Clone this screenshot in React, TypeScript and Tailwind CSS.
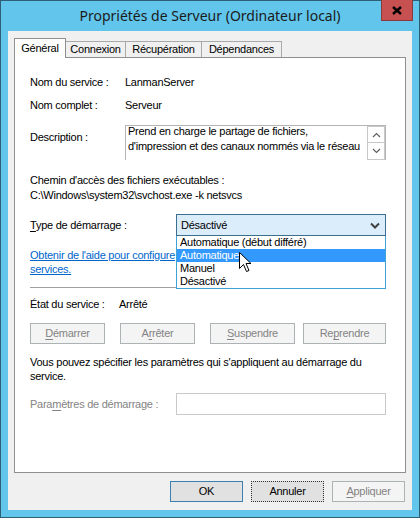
import React from 'react';

const Mn = ({ children }: { children: React.ReactNode }) => <span className="underline underline-offset-[2px]">{children}</span>;

const App = () => {
  return (
    <div className="relative w-[420px] h-[518px] bg-[#61c5ec] border border-[#2f5f74] flex flex-col font-['Liberation_Sans',Arial,sans-serif] text-[11px] tracking-[-0.25px] text-black select-none">
      {/* Title bar */}
      <div className="h-[30px] flex items-center justify-center pb-[1px]">
        <span className="font-['Noto_Sans',sans-serif] text-[14px] tracking-normal text-[#1b1b1b]">Propriétés de Serveur (Ordinateur local)</span>
      </div>
      <div className="absolute top-[-1px] right-[6px] w-[32px] h-[21px] bg-[#c75050] border border-[#8a3a3a] border-t-0 flex items-center justify-center">
        <svg width="10" height="9" viewBox="0 0 10 9">
          <path d="M1 1 L9 8 M9 1 L1 8" stroke="#000" strokeWidth="2.4" />
        </svg>
      </div>

      {/* Client area */}
      <div className="mx-[7px] mb-[7px] flex-1 bg-[#f0f0f0] flex flex-col pl-[6px] pr-[6px] pt-[7px]">
        {/* Tabs */}
        <div className="relative z-10 flex h-[20px] items-start">
          <div className="w-[52px] h-[20px] bg-white border border-b-0 border-[#8e8f8f] flex items-center justify-center pb-[1px]">Général</div>
          <div className="mt-[3px] w-[60px] h-[16px] border-t border-r border-[#a9a9a9] flex items-center justify-center">Connexion</div>
          <div className="mt-[3px] w-[76px] h-[16px] border-t border-r border-[#a9a9a9] flex items-center justify-center">Récupération</div>
          <div className="mt-[3px] w-[80px] h-[16px] border-t border-r border-[#a9a9a9] flex items-center justify-center">Dépendances</div>
        </div>

        {/* Panel */}
        <div className="-mt-[1px] h-[416px] bg-white border border-[#8e8f8f] flex flex-col pl-[15px] pr-[19px]">
          <div className="mt-[17px] h-[15px] flex items-center">
            <span className="w-[95px]">Nom du service :</span>
            <span>LanmanServer</span>
          </div>
          <div className="mt-[8px] h-[15px] flex items-center">
            <span className="w-[95px]">Nom complet :</span>
            <span>Serveur</span>
          </div>
          <div className="mt-[12px] flex items-start">
            <span className="w-[95px] mt-[5px] leading-[15px]">Description :</span>
            <div className="w-[261px] h-[35px] border border-[#b5b5b5] border-b-0 flex overflow-hidden">
              <div className="flex-1 pl-[2px] leading-[15px] -mt-[2px]">
                <div className="whitespace-nowrap">Prend en charge le partage de fichiers,</div>
                <div className="whitespace-nowrap">d'impression et des canaux nommés via le réseau</div>
              </div>
              <div className="w-[18px] flex flex-col">
                <div className="h-[17px] border border-[#c8c8c8] flex items-center justify-center">
                  <svg width="9" height="6" viewBox="0 0 9 6"><path d="M1 5 L4.5 1.5 L8 5" stroke="#606060" strokeWidth="1.2" fill="none" /></svg>
                </div>
                <div className="h-[17px] border border-t-0 border-[#c8c8c8] flex items-center justify-center">
                  <svg width="9" height="6" viewBox="0 0 9 6"><path d="M1 1 L4.5 4.5 L8 1" stroke="#606060" strokeWidth="1.2" fill="none" /></svg>
                </div>
              </div>
            </div>
          </div>
          <div className="mt-[13px] leading-[15px]">Chemin d'accès des fichiers exécutables :</div>
          <div className="leading-[15px]">C:\Windows\system32\svchost.exe -k netsvcs</div>

          {/* Startup type */}
          <div className="mt-[11px] flex items-center">
            <span className="w-[146px]"><Mn>T</Mn>ype de démarrage :</span>
            <div className="relative w-[210px] z-20">
              <div className="h-[22px] bg-[#dbecfa] border border-[#3c6e8f] flex items-center justify-between pl-[4px] pr-[5px]">
                <span>Désactivé</span>
                <svg width="10" height="7" viewBox="0 0 10 7"><path d="M1 1.5 L5 5.5 L9 1.5" stroke="#404040" strokeWidth="2" fill="none" /></svg>
              </div>
              <div className="absolute left-0 top-full w-[210px] bg-white border border-t-0 border-[#3ca3d4] flex flex-col leading-[13px]">
                <div className="h-[13px] pl-[3px]">Automatique (début différé)</div>
                <div className="h-[13px] pl-[3px] bg-[#3399ff] text-white">Automatique</div>
                <div className="h-[13px] pl-[3px]">Manuel</div>
                <div className="h-[13px] pl-[3px]">Désactivé</div>
                <svg className="absolute left-[62px] top-[16px]" width="13" height="21" viewBox="0 0 13 21">
                  <path d="M0.5 0.5 L0.5 16.5 L4.5 12.5 L7.5 19.5 L10 18.5 L7 11.5 L12 11.5 Z" fill="#fff" stroke="#000" strokeWidth="1" strokeLinejoin="miter" />
                </svg>
              </div>
            </div>
          </div>

          {/* Help link, partly hidden by the open list */}
          <div className="mt-[12px] leading-[14px] text-[#0066cc] underline">
            <div className="w-[146px] overflow-hidden whitespace-nowrap">Obtenir de l'aide pour configure</div>
            <div className="whitespace-nowrap">services.</div>
          </div>
          <div className="mt-[11px] h-px bg-[#a0a0a0]" />

          <div className="mt-[9px] h-[15px] flex items-center">
            <span className="w-[89px]">État du service :</span>
            <span>Arrêté</span>
          </div>

          <div className="mt-[11px] flex">
            <div className="w-[75px] h-[21px] bg-[#f4f4f4] border border-[#adb2b5] flex items-center justify-center text-[#838383]"><span><Mn>D</Mn>émarrer</span></div>
            <div className="ml-[15px] w-[75px] h-[21px] bg-[#f4f4f4] border border-[#adb2b5] flex items-center justify-center text-[#838383]"><span>A<Mn>r</Mn>rêter</span></div>
            <div className="ml-[15px] w-[85px] h-[21px] bg-[#f4f4f4] border border-[#adb2b5] flex items-center justify-center text-[#838383]"><span><Mn>S</Mn>uspendre</span></div>
            <div className="ml-[8px] w-[83px] h-[21px] bg-[#f4f4f4] border border-[#adb2b5] flex items-center justify-center text-[#838383]"><span>Re<Mn>p</Mn>rendre</span></div>
          </div>

          <div className="mt-[11px] leading-[14px]">
            <div className="whitespace-nowrap">Vous pouvez spécifier les paramètres qui s'appliquent au démarrage du</div>
            <div>service.</div>
          </div>

          <div className="mt-[10px] flex items-center">
            <span className="w-[146px] text-[#838383]">Para<Mn>m</Mn>ètres de démarrage :</span>
            <div className="w-[210px] h-[22px] bg-white border border-[#c9c9c9]" />
          </div>
        </div>

        {/* Dialog buttons */}
        <div className="mt-[8px] flex justify-end gap-[8px] pr-[1px]">
          <div className="w-[73px] h-[21px] bg-[#e1e1e1] border border-[#3c7fb1] flex items-center justify-center">OK</div>
          <div className="w-[73px] h-[21px] bg-[#e1e1e1] border border-dotted border-[#333] flex items-center justify-center">Annuler</div>
          <div className="w-[73px] h-[21px] bg-[#f4f4f4] border border-[#adb2b5] flex items-center justify-center text-[#838383]"><span><Mn>A</Mn>ppliquer</span></div>
        </div>
      </div>
    </div>
  );
};

export default App;
